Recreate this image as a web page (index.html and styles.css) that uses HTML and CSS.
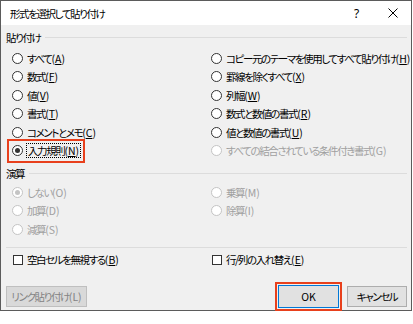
FILE: index.html
```html
<!DOCTYPE html>
<html lang="ja">

<head>
    <meta charset="UTF-8">
    <meta name="viewport" content="width=device-width, initial-scale=1.0">
    <title>形式を選択して貼り付け</title>

    <link rel="stylesheet" href="styles.css">
</head>

<body>
    <div class="dialog">
        <div class="titlebar">
            <span class="title">形式を選択して貼り付け</span>
            <span class="help">?</span>
            <span class="close">
                <svg viewBox="0 0 10 10" width="10" height="10" stroke="currentColor" stroke-width="1" fill="none">
                    <line x1="0.5" y1="0.5" x2="9.5" y2="9.5"></line>
                    <line x1="9.5" y1="0.5" x2="0.5" y2="9.5"></line>
                </svg>
            </span>
        </div>

        <div class="content">
            <div class="group-label"><span>貼り付け</span></div>
            <div class="options">
                <label class="option"><span class="radio"></span><span>すべて<span class="key">(<u>A</u>)</span></span></label>
                <label class="option"><span class="radio"></span><span>コピー元のテーマを使用してすべて貼り付け<span class="key">(<u>H</u>)</span></span></label>
                <label class="option"><span class="radio"></span><span>数式<span class="key">(<u>F</u>)</span></span></label>
                <label class="option"><span class="radio"></span><span>罫線を除くすべて<span class="key">(<u>X</u>)</span></span></label>
                <label class="option"><span class="radio"></span><span>値<span class="key">(<u>V</u>)</span></span></label>
                <label class="option"><span class="radio"></span><span>列幅<span class="key">(<u>W</u>)</span></span></label>
                <label class="option"><span class="radio"></span><span>書式<span class="key">(<u>T</u>)</span></span></label>
                <label class="option"><span class="radio"></span><span>数式と数値の書式<span class="key">(<u>R</u>)</span></span></label>
                <label class="option"><span class="radio"></span><span>コメントとメモ<span class="key">(<u>C</u>)</span></span></label>
                <label class="option"><span class="radio"></span><span>値と数値の書式<span class="key">(<u>U</u>)</span></span></label>
                <label class="option highlight"><span class="radio checked"></span><span class="focus">入力規則<span class="key">(<u>N</u>)</span></span></label>
                <label class="option disabled"><span class="radio"></span><span>すべての結合されている条件付き書式<span class="key">(G)</span></span></label>
            </div>

            <div class="group-label ops-label"><span>演算</span></div>
            <div class="options ops">
                <label class="option disabled"><span class="radio checked"></span><span>しない<span class="key">(O)</span></span></label>
                <label class="option disabled"><span class="radio"></span><span>乗算<span class="key">(M)</span></span></label>
                <label class="option disabled"><span class="radio"></span><span>加算<span class="key">(D)</span></span></label>
                <label class="option disabled"><span class="radio"></span><span>除算<span class="key">(I)</span></span></label>
                <label class="option disabled"><span class="radio"></span><span>減算<span class="key">(S)</span></span></label>
            </div>

            <div class="separator"></div>

            <div class="options checks">
                <label class="option"><span class="checkbox"></span><span>空白セルを無視する<span class="key">(<u>B</u>)</span></span></label>
                <label class="option"><span class="checkbox"></span><span>行/列の入れ替え<span class="key">(<u>E</u>)</span></span></label>
            </div>

            <div class="buttons">
                <button class="btn link" disabled>リンク貼り付け<span class="key">(L)</span></button>
                <button class="btn ok">OK</button>
                <button class="btn cancel">キャンセル</button>
            </div>
        </div>
    </div>
</body>

</html>
```

FILE: styles.css
```css
body {
    margin: 0;
    background: #fff;
    font-family: 'Noto Sans CJK JP', 'Noto Sans', sans-serif;
    font-size: 10.5px;
    letter-spacing: -1.4px;
    font-feature-settings: "palt";
    color: #000;
}

.key {
    letter-spacing: 0;
}

.dialog {
    width: 412px;
    height: 311px;
    box-sizing: border-box;
    border: 1px solid #5b5b5b;
    background: #f0f0f0;
    display: flex;
    flex-direction: column;
}

.titlebar {
    height: 24px;
    flex: none;
    background: #fff;
    display: flex;
    align-items: center;
    padding-left: 9px;
}

.title {
    flex: 1;
}

.help {
    width: 12px;
    margin-right: 22px;
    font-family: 'Noto Sans', sans-serif;
    font-size: 12px;
    letter-spacing: 0;
}

.close {
    width: 10px;
    margin-right: 13px;
    display: flex;
}

.content {
    padding: 0 4px 0 5px;
    display: flex;
    flex-direction: column;
}

.group-label {
    display: flex;
    align-items: center;
    gap: 5px;
    height: 14px;
    margin-top: 5px;
}

.group-label::after {
    content: "";
    flex: 1;
    height: 1px;
    background: #dcdcdc;
}

.ops-label {
    margin-top: 6px;
}

.options {
    display: grid;
    grid-template-columns: 199px 1fr;
    grid-auto-rows: 18.5px;
    padding-left: 6px;
    margin-top: 5px;
}

.ops {
    margin-top: 3px;
}

.option {
    display: flex;
    align-items: center;
    gap: 4px;
    white-space: nowrap;
}

.option u {
    text-underline-offset: 1px;
}

.option.disabled {
    color: #a0a0a0;
}

.radio {
    width: 11px;
    height: 11px;
    box-sizing: border-box;
    border: 1px solid #333;
    border-radius: 50%;
    background: #fff;
    display: flex;
    justify-content: center;
    align-items: center;
    flex: none;
}

.radio.checked::after {
    content: "";
    width: 5px;
    height: 5px;
    border-radius: 50%;
    background: #333;
}

.disabled .radio {
    border-color: #c4c4c4;
}

.disabled .radio.checked::after {
    background: #c4c4c4;
}

.highlight {
    justify-self: start;
    outline: 2px solid #e8401c;
    outline-offset: 3px;
    height: 14px;
    align-self: center;
}

.focus {
    outline: 1px dotted #000;
    padding: 0 1px;
    line-height: 13px;
}

.separator {
    height: 1px;
    background: #dcdcdc;
    margin-top: 8px;
}

.checks {
    margin-top: 3px;
}

.checkbox {
    width: 10px;
    height: 10px;
    box-sizing: border-box;
    border: 1px solid #333;
    background: #fff;
    flex: none;
    margin-left: 1px;
}

.buttons {
    display: flex;
    margin-top: 17px;
}

.btn {
    height: 21px;
    box-sizing: border-box;
    border: 1px solid #adadad;
    background: #e1e1e1;
    font-family: inherit;
    font-size: 10.5px;
    letter-spacing: -1.4px;
    font-feature-settings: "palt";
    white-space: nowrap;
    color: #000;
    padding: 0;
}

.btn.link {
    width: 81px;
    margin-right: auto;
    background: #d9d9d9;
    border-color: #bfbfbf;
    color: #838383;
}

.btn.ok {
    width: 61px;
    height: 23px;
    margin-top: -1px;
    border-color: #0078d7;
    outline: 2px solid #e8401c;
    outline-offset: 1px;
    letter-spacing: 0;
}

.btn.cancel {
    width: 60px;
    margin-left: 8px;
}
```
